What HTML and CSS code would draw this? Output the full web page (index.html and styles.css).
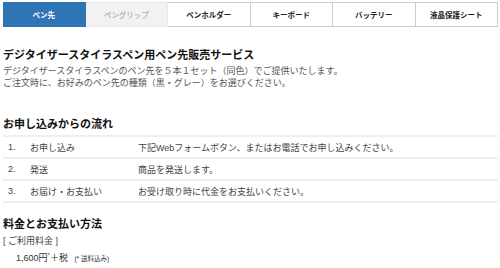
FILE: index.html
```html
<!DOCTYPE html>
<html lang="ja">
<head>
    <meta charset="UTF-8">
    <title>ペン先販売サービス</title>
    <link rel="stylesheet" href="styles.css">
</head>
<body>
    <div class="page">
        <ul class="tabs">
            <li class="tab active">ペン先</li>
            <li class="tab muted">ペングリップ</li>
            <li class="tab">ペンホルダー</li>
            <li class="tab">キーボード</li>
            <li class="tab">バッテリー</li>
            <li class="tab">液晶保護シート</li>
        </ul>

        <h1 class="title">デジタイザースタイラスペン用ペン先販売サービス</h1>
        <p class="lead">
            デジタイザースタイラスペンのペン先を５本１セット（同色）でご提供いたします。<br>
            ご注文時に、お好みのペン先の種類（黒・グレー）をお選びください。
        </p>

        <h2 class="section">お申し込みからの流れ</h2>
        <table class="flow">
            <tr>
                <td class="num">1.</td>
                <td class="step">お申し込み</td>
                <td>下記Webフォームボタン、またはお電話でお申し込みください。</td>
            </tr>
            <tr>
                <td class="num">2.</td>
                <td class="step">発送</td>
                <td>商品を発送します。</td>
            </tr>
            <tr>
                <td class="num">3.</td>
                <td class="step">お届け・お支払い</td>
                <td>お受け取り時に代金をお支払いください。</td>
            </tr>
        </table>

        <h2 class="section price-title">料金とお支払い方法</h2>
        <div class="label">[ ご利用料金 ]</div>
        <div class="price">1,600円<sup>*</sup>＋税 <small>(* 送料込み)</small></div>
    </div>
</body>
</html>
```

FILE: styles.css
```css
body {
    margin: 0;
    background-color: #fff;
    color: #333;
    font-family: "Liberation Sans", "Noto Sans CJK JP", sans-serif;
}
.page {
    width: 495px;
    padding: 2px 0 0 3px;
}
.tabs {
    display: flex;
    list-style: none;
    margin: 0;
    padding: 0;
}
.tab {
    flex: 1;
    height: 25px;
    line-height: 25px;
    text-align: center;
    font-size: 7.5px;
    font-weight: bold;
    color: #222;
    border: 1px solid #ccc;
    border-left: none;
    box-sizing: border-box;
}
.tab.active {
    background-color: #2f74b5;
    border-color: #2f74b5;
    color: #fff;
}
.tab.muted {
    background-color: #f2f2f2;
    color: #999;
    font-weight: normal;
    border-color: #e6e6e6;
}
.title {
    font-size: 11px;
    line-height: 14px;
    margin: 21px 0 4px;
    color: #111;
}
.lead {
    font-size: 9px;
    line-height: 11.5px;
    margin: 0;
    color: #555;
}
.section {
    font-size: 11px;
    line-height: 14px;
    margin: 28px 0 4px;
    color: #111;
}
.flow {
    width: 100%;
    border-collapse: collapse;
    font-size: 9px;
    color: #444;
    border-top: 2px solid #eee;
}
.flow td {
    height: 20px;
    padding: 0;
    border-bottom: 2px solid #eee;
}
.flow .num {
    width: 22px;
    padding-left: 5px;
}
.flow .step {
    width: 108px;
}
.price-title {
    margin-top: 14px;
    margin-bottom: 4px;
}
.label {
    font-size: 9px;
    line-height: 13px;
    color: #444;
}
.price {
    font-size: 9px;
    line-height: 15px;
    padding-left: 13px;
    color: #333;
}
.price sup {
    font-size: 6px;
}
.price small {
    font-size: 6.5px;
    margin-left: 4px;
}
```
